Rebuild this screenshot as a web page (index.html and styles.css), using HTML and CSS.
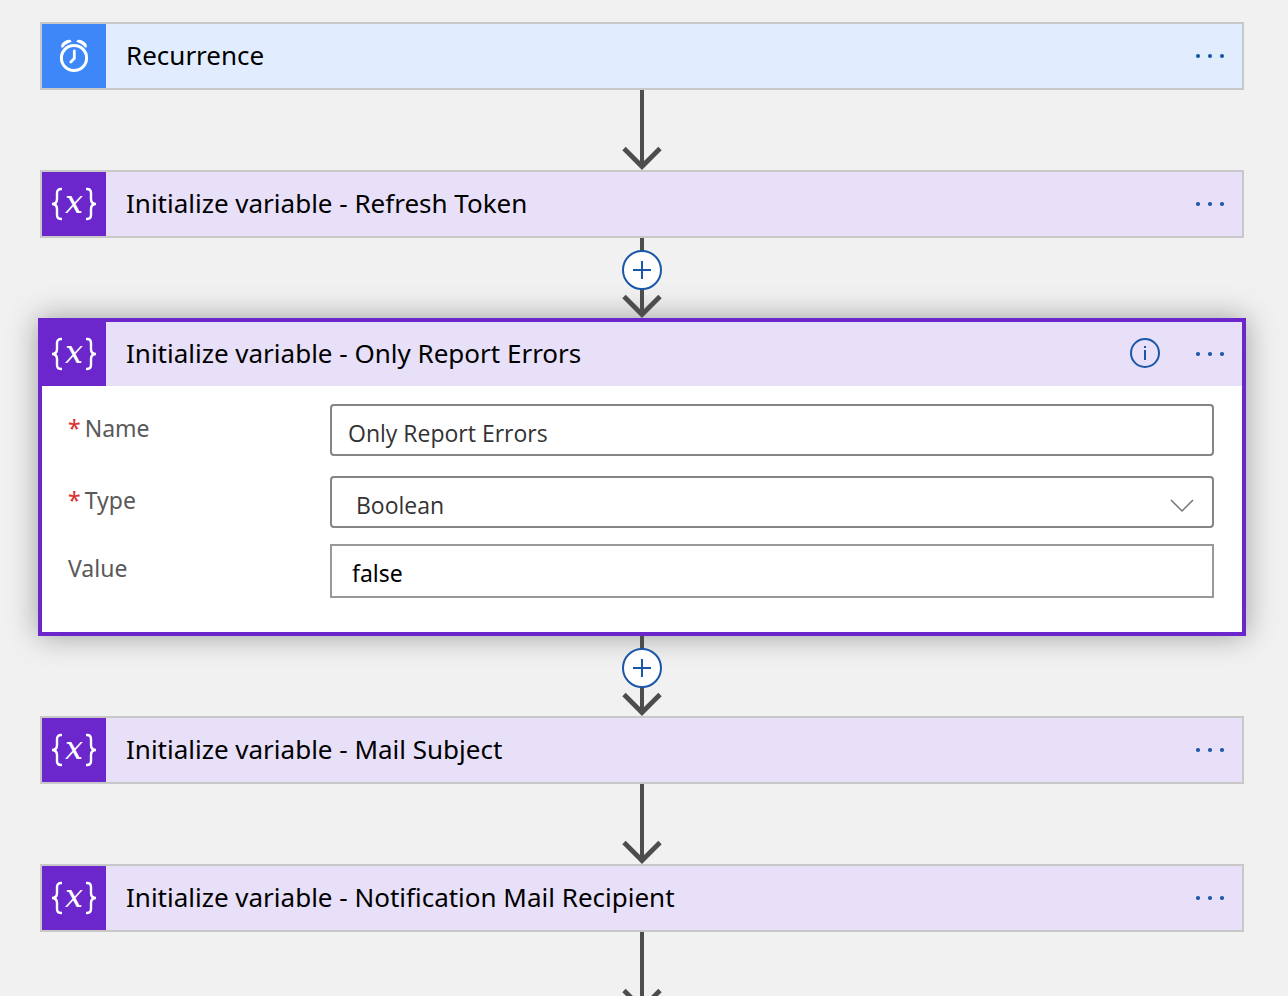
FILE: index.html
```html
<!DOCTYPE html>
<html lang="en">
<head>
<meta charset="utf-8">
<meta name="viewport" content="width=device-width, initial-scale=1">
<title>Flow</title>
<link rel="stylesheet" href="styles.css">
</head>
<body>
<svg class="defs" aria-hidden="true">
  <symbol id="braces" viewBox="0 0 64 64">
    <path d="M20 17h-1q-4 0-4 4v6q0 5-5 5q5 0 5 5v6q0 4 4 4h1M44 17h1q4 0 4 4v6q0 5 5 5q-5 0-5 5v6q0 4-4 4h-1" fill="none" stroke="#fff" stroke-width="2.4"/>
  </symbol>
  <symbol id="arrow" viewBox="0 0 40 80">
    <path d="M20 0v77" stroke="#4d4d4d" stroke-width="4"/>
    <path d="M2 58.500l18 18l18-18" fill="none" stroke="#4d4d4d" stroke-width="4.800"/>
  </symbol>
  <symbol id="dots" viewBox="0 0 30 6">
    <g fill="#1b57a8"><circle cx="3" cy="3" r="2.1"/><circle cx="15" cy="3" r="2.1"/><circle cx="27" cy="3" r="2.1"/></g>
  </symbol>
  <symbol id="plus" viewBox="0 0 20 20">
    <path d="M10 1v18M1 10h18" fill="none" stroke="#1b57a8" stroke-width="2"/>
  </symbol>
</svg>
<main class="flow">
  <section class="card trigger">
    <header class="head">
      <span class="icon"><svg viewBox="0 0 64 64" aria-hidden="true"><g fill="none" stroke="#fff" stroke-linecap="round"><circle cx="32" cy="34" r="12.6" stroke-width="3"/><path d="M32.300 27v7.500l-3.500 3.500" stroke-width="2.800"/></g><path d="M19.300 23.500q-.8-3.500 2.300-5.600q3.700-2.600 6.900-1.900l1.200 1.800q-5.500 1.400-8.700 5.700zM44.700 23.500q.8-3.500-2.300-5.600q-3.700-2.600-6.900-1.900l-1.200 1.800q5.500 1.400 8.700 5.700z" fill="#fff"/></svg></span>
      <h2 class="title">Recurrence</h2>
      <button class="more" aria-label="More"><svg aria-hidden="true"><use href="#dots"/></svg></button>
    </header>
  </section>
  <div class="link"><svg class="arrow" aria-hidden="true"><use href="#arrow"/></svg></div>
  <section class="card">
    <header class="head">
      <span class="icon"><svg viewBox="0 0 64 64" aria-hidden="true"><use href="#braces"/><text class="glyph" x="32" y="41" text-anchor="middle">x</text></svg></span>
      <h2 class="title">Initialize variable - Refresh Token</h2>
      <button class="more" aria-label="More"><svg aria-hidden="true"><use href="#dots"/></svg></button>
    </header>
  </section>
  <div class="link"><svg class="arrow" aria-hidden="true"><use href="#arrow"/></svg><button class="add" aria-label="Insert step"><svg aria-hidden="true"><use href="#plus"/></svg></button></div>
  <section class="card selected">
    <header class="head">
      <span class="icon"><svg viewBox="0 0 64 64" aria-hidden="true"><use href="#braces"/><text class="glyph" x="32" y="41" text-anchor="middle">x</text></svg></span>
      <h2 class="title">Initialize variable - Only Report Errors</h2>
      <button class="info" aria-label="Information"><svg viewBox="0 0 30 30" aria-hidden="true"><circle cx="15" cy="15" r="14" fill="none" stroke="#1b57a8" stroke-width="2"/><path d="M15 12v10M15 8v2" stroke="#1b57a8" stroke-width="2"/></svg></button>
      <button class="more" aria-label="More"><svg aria-hidden="true"><use href="#dots"/></svg></button>
    </header>
    <form class="fields">
      <label class="label" for="name"><span class="star">*</span>Name</label>
      <input class="box name" id="name" type="text" value="Only Report Errors">
      <label class="label" for="type"><span class="star">*</span>Type</label>
      <span class="picker">
        <select class="box type" id="type"><option>Boolean</option></select>
        <svg class="chevron" viewBox="0 0 24 14" aria-hidden="true"><path d="M1 1l11 11l11-11" fill="none" stroke="#777" stroke-width="1.500"/></svg>
      </span>
      <label class="label" for="value">Value</label>
      <input class="box value" id="value" type="text" value="false">
    </form>
  </section>
  <div class="link"><svg class="arrow" aria-hidden="true"><use href="#arrow"/></svg><button class="add" aria-label="Insert step"><svg aria-hidden="true"><use href="#plus"/></svg></button></div>
  <section class="card">
    <header class="head">
      <span class="icon"><svg viewBox="0 0 64 64" aria-hidden="true"><use href="#braces"/><text class="glyph" x="32" y="41" text-anchor="middle">x</text></svg></span>
      <h2 class="title">Initialize variable - Mail Subject</h2>
      <button class="more" aria-label="More"><svg aria-hidden="true"><use href="#dots"/></svg></button>
    </header>
  </section>
  <div class="link"><svg class="arrow" aria-hidden="true"><use href="#arrow"/></svg></div>
  <section class="card">
    <header class="head">
      <span class="icon"><svg viewBox="0 0 64 64" aria-hidden="true"><use href="#braces"/><text class="glyph" x="32" y="41" text-anchor="middle">x</text></svg></span>
      <h2 class="title">Initialize variable - Notification Mail Recipient</h2>
      <button class="more" aria-label="More"><svg aria-hidden="true"><use href="#dots"/></svg></button>
    </header>
  </section>
  <div class="link"><svg class="arrow" aria-hidden="true"><use href="#arrow"/></svg></div>
</main>
</body>
</html>
```

FILE: styles.css
```css
* { box-sizing: border-box; }

body {
  margin: 0;
  height: 100vh;
  overflow: hidden;
  background: #f1f1f1;
  font-family: "Noto Sans", "Open Sans", sans-serif;
}

.defs { position: absolute; width: 0; height: 0; }

button {
  display: flex;
  align-items: center;
  justify-content: center;
  padding: 0;
  border: 0;
  background: none;
}

.flow { padding: 22px 44px 0 40px; }

.card { border: 2px solid #c8c8c8; background: #fff; }

.head {
  display: flex;
  align-items: center;
  height: 64px;
  padding-right: 16px;
  background: #e8dff8;
}

.trigger .head { background: #e1edff; }

.icon { width: 64px; height: 64px; background: #6b26cc; }
.trigger .icon { background: #3d87f8; }
.icon svg { display: block; width: 64px; height: 64px; }

.glyph {
  fill: #fff;
  font: italic 32px "DejaVu Serif", serif;
}

.title {
  flex: 1;
  margin: 0 0 0 20px;
  padding-bottom: 2px;
  color: #000;
  font-size: 26px;
  font-weight: 400;
  line-height: 36px;
  white-space: nowrap;
}

.more { width: 32px; height: 32px; }
.more svg { width: 30px; height: 6px; }

.info { width: 30px; height: 30px; margin: 0 34px 2px 0; }
.info svg { width: 30px; height: 30px; }

.link { position: relative; display: flex; justify-content: center; height: 80px; }
.arrow { width: 40px; height: 80px; }

.add {
  position: absolute;
  top: 12px;
  width: 40px;
  height: 40px;
  border: 2px solid #1b57a8;
  border-radius: 50%;
  background: #fff;
}
.add svg { width: 20px; height: 20px; }

.selected {
  margin: 0 -2px;
  border: 4px solid #6b26cc;
  box-shadow: 0 0 28px rgba(0, 0, 0, .35);
}

.fields {
  display: grid;
  grid-template-columns: 262px 1fr;
  padding: 18px 28px 34px 26px;
}

.label {
  color: #595959;
  font-size: 23px;
  line-height: 48px;
}

.star { margin-right: 4px; color: #d92c2c; }

.box {
  display: block;
  width: 100%;
  height: 52px;
  margin: 0 0 20px;
  border: 2px solid #858585;
  border-radius: 4px;
  background: #fff;
  color: #333;
  font: 23px "Open Sans", "Noto Sans", sans-serif;
}

.name { padding: 6px 16px 0; }

.picker { position: relative; }
.type { margin-bottom: 16px; padding: 6px 24px 0; appearance: none; }
.chevron { position: absolute; top: 23px; right: 20px; width: 24px; height: 14px; pointer-events: none; }

.value {
  height: 54px;
  margin: 0;
  padding: 4px 20px 0;
  border-color: #999;
  border-radius: 0;
  color: #000;
  font-family: "Noto Sans", sans-serif;
}
```
